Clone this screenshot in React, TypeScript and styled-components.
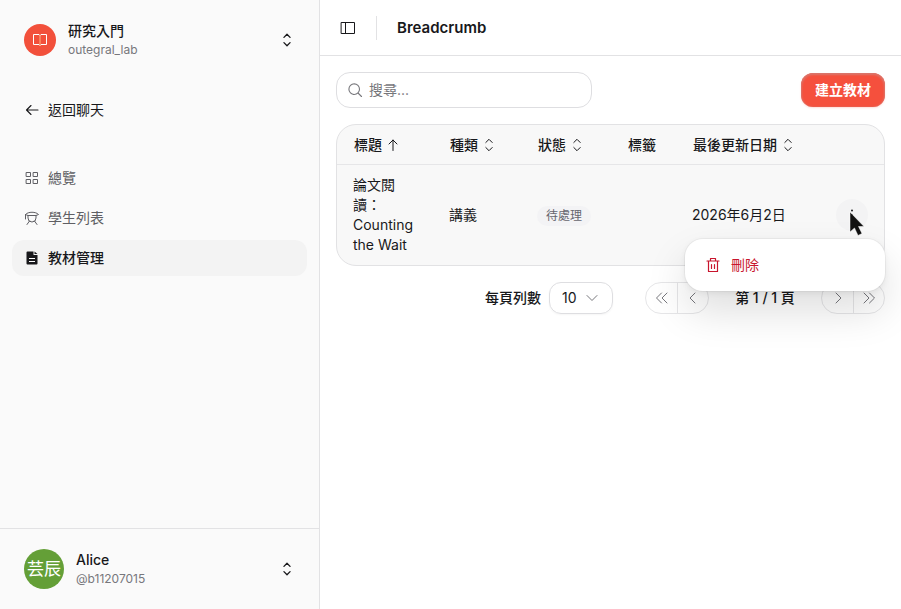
import React from "react";
import styled, { createGlobalStyle, css } from "styled-components";

const GlobalStyle = createGlobalStyle`
  *, *::before, *::after { box-sizing: border-box; }
  body {
    margin: 0;
    background: #fff;
    color: #18181b;
    font-family: "Inter", "Noto Sans CJK TC", sans-serif;
    font-size: 14px;
    line-height: 20px;
  }
  button, input, select { font: inherit; color: inherit; }
`;

const Page = styled.div`
  display: flex;
  min-height: 100vh;
`;

const Sidebar = styled.aside`
  display: flex;
  flex-direction: column;
  flex: 0 0 320px;
  background: #fafafa;
  border-right: 1px solid #e2e2e4;
`;

const AccountButton = styled.button<{ $footer?: boolean }>`
  display: flex;
  align-items: center;
  gap: 12px;
  width: 100%;
  min-height: 80px;
  padding: 20px 25px 20px 24px;
  border: 0;
  background: none;
  text-align: left;
  ${(p) => p.$footer && css`
    margin-top: auto;
    border-top: 1px solid #e2e2e4;
  `}
`;

const Avatar = styled.span<{ $size: number; $color: string }>`
  display: flex;
  flex: none;
  align-items: center;
  justify-content: center;
  width: ${(p) => p.$size}px;
  height: ${(p) => p.$size}px;
  border-radius: 50%;
  background: ${(p) => p.$color};
  color: #fff;
  font-size: 17px;
  white-space: nowrap;
`;

const AccountText = styled.span`
  display: flex;
  flex: 1;
  flex-direction: column;
`;

const AccountName = styled.span`
  font-weight: 500;
  line-height: 20px;
`;

const AccountHandle = styled.span`
  color: #77777c;
  font-size: 12px;
  line-height: 18px;
`;

const Nav = styled.nav`
  display: flex;
  flex-direction: column;
  gap: 4px;
  padding: 12px 12px 20px;
`;

const NavLink = styled.a<{ $tone?: "active" | "strong" }>`
  display: flex;
  align-items: center;
  gap: 8px;
  height: 36px;
  padding: 0 12px;
  border-radius: 12px;
  color: ${(p) => (p.$tone ? "#18181b" : "#5f5f64")};
  text-decoration: none;
  ${(p) => p.$tone === "active" && css`
    background: #f3f3f3;
    font-weight: 500;
  `}
`;

const Main = styled.main`
  flex: 1;
  min-width: 0;
`;

const TopBar = styled.header`
  display: flex;
  align-items: center;
  height: 56px;
  padding: 0 16px;
  border-bottom: 1px solid #e2e2e4;
`;

const IconButton = styled.button`
  display: flex;
  align-items: center;
  justify-content: center;
  width: 24px;
  height: 24px;
  padding: 0;
  border: 0;
  background: none;
`;

const Divider = styled.span`
  width: 1px;
  height: 24px;
  margin: 0 20px 0 16px;
  background: #e2e2e4;
`;

const PageTitle = styled.h1`
  margin: 0;
  font-size: 15px;
  font-weight: 600;
  line-height: 24px;
`;

const Content = styled.div`
  display: flex;
  flex-direction: column;
  gap: 16px;
  padding: 16px;
`;

const Toolbar = styled.div`
  display: flex;
  align-items: center;
  justify-content: space-between;
  gap: 16px;
`;

const SearchField = styled.label`
  display: flex;
  align-items: center;
  gap: 6px;
  flex: 0 1 256px;
  min-width: 0;
  height: 36px;
  padding: 0 10px;
  border: 1px solid #dedee1;
  border-radius: 14px;
  color: #77777c;
`;

const SearchInput = styled.input`
  flex: 1;
  min-width: 0;
  padding: 0;
  border: 0;
  outline: 0;
  background: none;
  &::placeholder { color: #77777c; opacity: 1; }
`;

const PrimaryButton = styled.button`
  height: 34px;
  padding: 0 14px;
  border: 0;
  border-radius: 12px;
  background: #f5503d;
  box-shadow: inset 0 1px 2px 1px #d9766c, 0 1px 2px #f5503d33;
  color: #fff;
  font-weight: 600;
`;

const TableCard = styled.div`
  border: 1px solid #e2e2e4;
  border-radius: 20px;
  background: #f8f8f8;
`;

const Table = styled.table`
  width: 100%;
  table-layout: fixed;
  border-collapse: separate;
  border-spacing: 0;
`;

const Column = styled.col<{ $width?: number }>`
  width: ${(p) => (p.$width ? `${p.$width}px` : "auto")};
`;

const HeadCell = styled.th`
  height: 40px;
  padding: 0 16px;
  border-bottom: 1px solid #e6e6e8;
  font-weight: 500;
  text-align: left;
  white-space: nowrap;
`;

const SortButton = styled.button`
  display: flex;
  align-items: center;
  gap: 3px;
  padding: 0 1px;
  border: 0;
  background: none;
  font-weight: 500;
`;

const Cell = styled.td`
  padding: 10px 16px;
  vertical-align: middle;
`;

const ActionCell = styled(Cell)`
  padding: 10px 16px 10px 0;
`;

const Badge = styled.span`
  display: inline-block;
  padding: 0 9px;
  border-radius: 10px;
  background: #f3f3f5;
  color: #66666e;
  font-size: 12px;
  white-space: nowrap;
`;

const MenuAnchor = styled.div`
  position: relative;
  width: 32px;
  margin-left: auto;
`;

const RoundButton = styled(IconButton)`
  width: 32px;
  height: 32px;
  border-radius: 50%;
  background: #f3f3f4;
`;

const Menu = styled.div`
  position: absolute;
  z-index: 1;
  top: 40px;
  right: -17px;
  width: 200px;
  padding: 8px;
  border-radius: 18px;
  background: #fff;
  box-shadow: 0 0 0 1px #0000000a, 0 2px 6px #00000010, 0 20px 40px #00000022;
`;

const MenuItem = styled.button`
  display: flex;
  align-items: center;
  gap: 10px;
  width: 100%;
  height: 36px;
  padding: 0 12px;
  border: 0;
  background: none;
  color: #c8152d;
`;

const Pointer = styled.svg`
  position: absolute;
  z-index: 2;
  top: 12px;
  left: 13px;
`;

const Pagination = styled.div`
  display: flex;
  align-items: center;
  justify-content: flex-end;
  gap: 32px;
  font-weight: 500;
  white-space: nowrap;
`;

const PageSize = styled.label`
  display: flex;
  align-items: center;
  gap: 8px;
`;

const SelectBox = styled.span`
  display: grid;
  align-items: center;
  width: 64px;
  height: 32px;
  border: 1px solid #dedee1;
  border-radius: 12px;
  box-shadow: 0 1px 2px #0000000a;
  font-weight: 400;
  & > * { grid-area: 1 / 1; }
  & > svg { justify-self: end; margin-right: 12px; color: #77777c; pointer-events: none; }
`;

const Select = styled.select`
  appearance: none;
  width: 100%;
  height: 30px;
  padding: 0 12px;
  border: 0;
  outline: 0;
  background: none;
`;

const Pager = styled.div`
  display: flex;
  align-items: center;
  gap: 24px;
`;

const PageStatus = styled.span`
  min-width: 64px;
  text-align: center;
`;

const ButtonGroup = styled.div`
  display: flex;
  height: 32px;
  border: 1px solid #e6e6e8;
  border-radius: 16px;
  color: #77777c;
`;

const PageButton = styled(IconButton)`
  width: 31px;
  height: 30px;
  & + & { border-left: 1px solid #e6e6e8; }
`;

type IconProps = { d: string; size?: number; box?: number; stroke?: number };

function Icon({ d, size = 16, box = 16, stroke = 1 }: IconProps) {
  return (
    <svg width={size} height={size} viewBox={`0 0 ${box} ${box}`} fill="none" stroke="currentColor"
      strokeWidth={stroke} strokeLinecap="round" strokeLinejoin="round" aria-hidden="true">
      <path d={d} />
    </svg>
  );
}

const icons = {
  updown: "M4.500 5 8 1.500 11.500 5M4.500 11 8 14.500l3.500-3.500",
  sort: "M4.800 5.500 8 2.300l3.200 3.200M4.800 10.500l3.200 3.200 3.200-3.200",
  back: "M14 8H2.500M7 3.500 2.500 8 7 12.500",
  up: "M8 13.500V3M4 7l4-4 4 4",
  grid: "M2.500 2.500h4v4h-4zM9.500 2.500h4v4h-4zM2.500 9.500h4v4h-4zM9.500 9.500h4v4h-4z",
  student: "M1.500 9V4.500C4 1.500 12 1.500 14.500 4.500L12 5.500H4L1.500 4.500M4 5.500V8a4 4 0 0 0 8 0V5.500M5.500 11l-2.500 3.500M10.500 11l2.500 3.500",
  panel: "M1.500 2.500h13v11h-13zM5.500 2.500v11",
  search: "M12.500 7.200a5.300 5.300 0 1 1-10.600 0 5.300 5.300 0 0 1 10.600 0ZM11 11l3.500 3.500",
  trash: "M2 4h12M5.500 4V1.500h5V4M3.500 4v10.500h9V4M6.500 7.500v4M9.500 7.500v4",
  down: "m3 5.500 5 5 5-5",
  left: "m10 3-5 5 5 5",
  right: "m6 3 5 5-5 5",
  first: "M7.500 3 2.500 8l5 5M13 3 8 8l5 5",
  last: "m3 3 5 5-5 5M8.500 3l5 5-5 5",
};

const BookIcon = () => (
  <svg width="16" height="16" viewBox="0 0 16 16" fill="none" aria-hidden="true">
    <path stroke="#fff" strokeLinejoin="round" d="M8 3.500 7 2.500H1.500v10H7l1 1 1-1h5.500v-10H9Z" />
    <path stroke="#ffb37e" strokeLinecap="round" d="M8 4v9.500" />
  </svg>
);

const FileIcon = () => (
  <svg width="16" height="16" viewBox="0 0 16 16" aria-hidden="true">
    <path fill="#18181b" d="M2.500 2.500a1 1 0 0 1 1-1H9.500V5h4v8.500a1 1 0 0 1-1 1h-9a1 1 0 0 1-1-1ZM10.500 1.500 13.500 4h-3Z" />
    <path stroke="#fff" d="M5 8.500h6M5 11.500h6" />
  </svg>
);

const DotsIcon = () => (
  <svg width="16" height="16" viewBox="0 0 16 16" fill="currentColor" aria-hidden="true">
    <circle cx="8" cy="3.500" r="1" /><circle cx="8" cy="8" r="1" /><circle cx="8" cy="12.500" r="1" />
  </svg>
);

function SortHeader({ label, icon = icons.sort }: { label: string; icon?: string }) {
  return (
    <HeadCell scope="col">
      <SortButton type="button">{label}<Icon d={icon} /></SortButton>
    </HeadCell>
  );
}

function SidebarPanel() {
  return (
    <Sidebar>
      <AccountButton type="button">
        <Avatar $size={32} $color="#f2503b"><BookIcon /></Avatar>
        <AccountText>
          <AccountName>研究入門</AccountName>
          <AccountHandle>outegral_lab</AccountHandle>
        </AccountText>
        <Icon d={icons.updown} size={14} stroke={1.5} />
      </AccountButton>
      <Nav>
        <NavLink href="#chat" $tone="strong"><Icon d={icons.back} stroke={1.1} />返回聊天</NavLink>
      </Nav>
      <Nav aria-label="課程">
        <NavLink href="#overview"><Icon d={icons.grid} />總覽</NavLink>
        <NavLink href="#students"><Icon d={icons.student} />學生列表</NavLink>
        <NavLink href="#materials" $tone="active" aria-current="page"><FileIcon />教材管理</NavLink>
      </Nav>
      <AccountButton type="button" $footer>
        <Avatar $size={40} $color="#649f37">芸辰</Avatar>
        <AccountText>
          <AccountName>Alice</AccountName>
          <AccountHandle>@b11207015</AccountHandle>
        </AccountText>
        <Icon d={icons.updown} size={14} stroke={1.5} />
      </AccountButton>
    </Sidebar>
  );
}

function MaterialsTable() {
  return (
    <TableCard>
      <Table>
        <colgroup>
          <Column $width={96} /><Column $width={88} /><Column $width={91} />
          <Column $width={64} /><Column /><Column $width={64} />
        </colgroup>
        <thead>
          <tr>
            <SortHeader label="標題" icon={icons.up} />
            <SortHeader label="種類" />
            <SortHeader label="狀態" />
            <HeadCell scope="col">標籤</HeadCell>
            <SortHeader label="最後更新日期" />
            <HeadCell aria-label="操作" />
          </tr>
        </thead>
        <tbody>
          <tr>
            <Cell>論文閱讀：Counting the Wait</Cell>
            <Cell>講義</Cell>
            <Cell><Badge>待處理</Badge></Cell>
            <Cell />
            <Cell>2026年6月2日</Cell>
            <ActionCell>
              <MenuAnchor>
                <RoundButton type="button" aria-label="更多操作" aria-expanded="true"><DotsIcon /></RoundButton>
                <Menu role="menu">
                  <MenuItem type="button" role="menuitem"><Icon d={icons.trash} stroke={1.2} />刪除</MenuItem>
                </Menu>
                <Pointer width="16" height="25" viewBox="0 0 16 25" aria-hidden="true">
                  <path fill="#111" stroke="#fff" strokeWidth=".5" d="M1 1v20l4.500-4 3.500 7.500 4-2-3.500-7H15Z" />
                </Pointer>
              </MenuAnchor>
            </ActionCell>
          </tr>
        </tbody>
      </Table>
    </TableCard>
  );
}

export default function App() {
  return (
    <>
      <GlobalStyle />
      <Page>
        <SidebarPanel />
        <Main>
          <TopBar>
            <IconButton type="button" aria-label="切換側邊欄"><Icon d={icons.panel} /></IconButton>
            <Divider />
            <PageTitle>Breadcrumb</PageTitle>
          </TopBar>
          <Content>
            <Toolbar>
              <SearchField>
                <Icon d={icons.search} stroke={1.1} />
                <SearchInput type="search" placeholder="搜尋..." aria-label="搜尋" />
              </SearchField>
              <PrimaryButton type="button">建立教材</PrimaryButton>
            </Toolbar>
            <MaterialsTable />
            <Pagination>
              <PageSize>
                每頁列數
                <SelectBox>
                  <Select defaultValue="10"><option>10</option><option>20</option><option>50</option></Select>
                  <Icon d={icons.down} />
                </SelectBox>
              </PageSize>
              <Pager>
                <ButtonGroup>
                  <PageButton type="button" aria-label="第一頁"><Icon d={icons.first} /></PageButton>
                  <PageButton type="button" aria-label="上一頁"><Icon d={icons.left} /></PageButton>
                </ButtonGroup>
                <PageStatus>第 1 / 1 頁</PageStatus>
                <ButtonGroup>
                  <PageButton type="button" aria-label="下一頁"><Icon d={icons.right} /></PageButton>
                  <PageButton type="button" aria-label="最後一頁"><Icon d={icons.last} /></PageButton>
                </ButtonGroup>
              </Pager>
            </Pagination>
          </Content>
        </Main>
      </Page>
    </>
  );
}
